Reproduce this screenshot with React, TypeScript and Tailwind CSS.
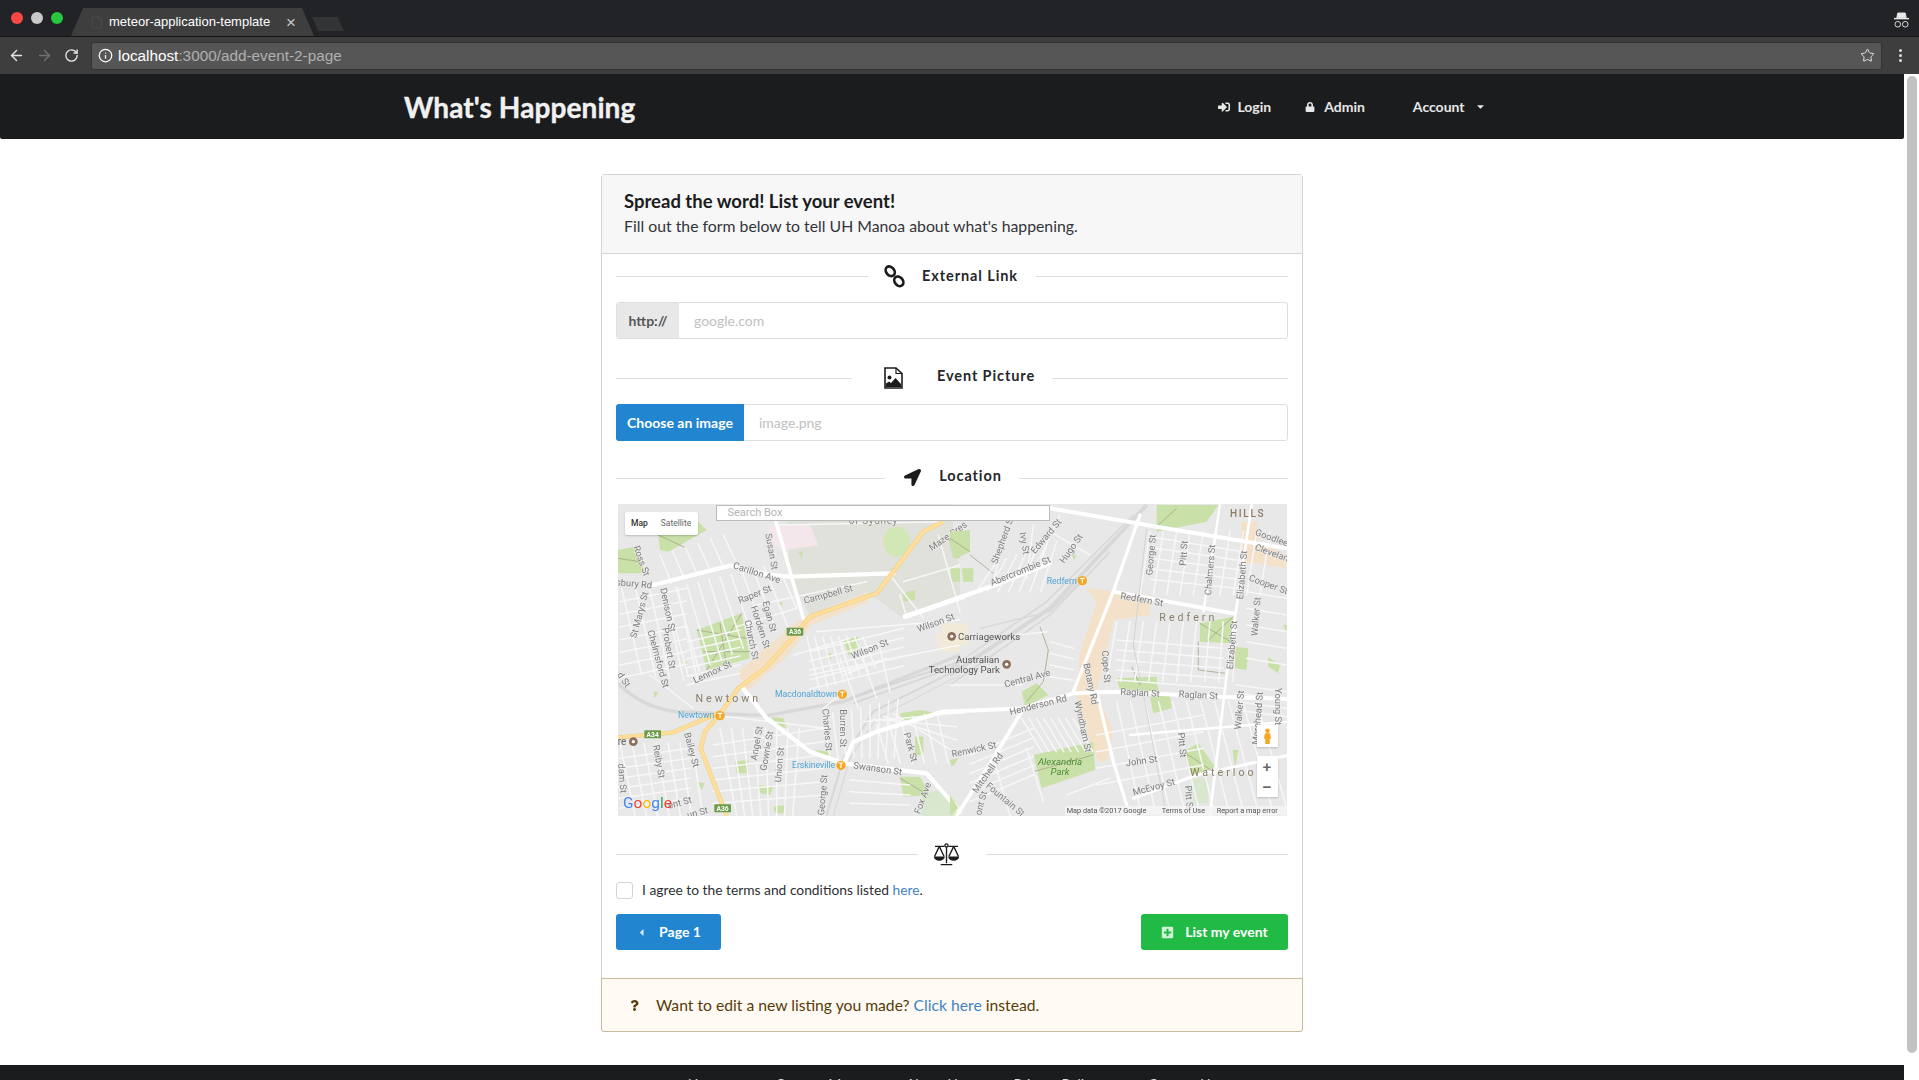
import React from "react";
import { ArrowLeft, ArrowRight, RotateCw, Info, Star, File } from "lucide-react";
import { FaSignInAlt, FaLock, FaCaretDown, FaCaretLeft, FaPlusSquare, FaQuestion, FaLocationArrow } from "react-icons/fa";

type Seg = number[];
type Lbl = [number, number, number, string];

const range = (n: number) => Array.from({ length: n }, (_, i) => i);

const leftParks: Seg[] = [
  [145, 120, 265, 80, 290, 105, 175, 170, 150, 165],
  [23, 165, 75, 155, 105, 235, 30, 235, 23, 232],
  [260, 405, 395, 355, 420, 490, 290, 525],
  [700, 435, 745, 425, 745, 470, 715, 480],
  [1015, 130, 1050, 125, 1050, 190, 1030, 190],
  [870, 655, 930, 645, 985, 655, 920, 670, 875, 682],
  [870, 845, 930, 845, 960, 900, 880, 905],
  [915, 725, 940, 725, 940, 780, 915, 780],
  [375, 800, 415, 795, 415, 835, 380, 835],
  [445, 870, 490, 875, 480, 900, 450, 895],
  [260, 860, 285, 865, 275, 885],
  [490, 935, 525, 930, 520, 955, 495, 955],
  [650, 475, 665, 475, 660, 500],
  [880, 295, 915, 285, 915, 315, 880, 320],
  [565, 170, 580, 170, 575, 190],
  [505, 322, 518, 322, 515, 335],
  [485, 665, 520, 670, 530, 700, 500, 690],
  [130, 590, 145, 590, 135, 610],
  [220, 500, 232, 500, 230, 518],
  [615, 765, 660, 770, 660, 785, 625, 780],
  [1020, 220, 1050, 220, 1050, 260, 1025, 260],
  [1020, 795, 1045, 790, 1030, 815],
];
const rightParks: Seg[] = [
  [620, 30, 805, 30, 770, 80, 620, 110],
  [750, 385, 850, 365, 850, 445, 750, 440],
  [500, 550, 620, 545, 625, 590, 510, 585],
  [600, 605, 660, 600, 665, 640, 610, 655],
  [855, 455, 895, 460, 890, 525, 855, 520],
  [955, 485, 990, 510, 985, 535, 955, 515],
  [250, 780, 430, 740, 435, 825, 275, 880],
  [215, 590, 260, 565, 295, 600, 225, 635],
  [700, 770, 745, 745, 795, 815, 725, 850],
  [848, 765, 865, 765, 855, 820],
  [0, 110, 60, 105, 60, 170, 20, 190, 0, 150],
  [35, 220, 70, 220, 70, 260, 40, 260],
  [0, 900, 25, 940, 0, 962],
  [0, 795, 20, 790, 5, 815],
  [1000, 390, 1010, 390, 1010, 415],
  [365, 180, 380, 180, 372, 195],
];

const leftMinor: Seg[] = [
  ...range(10).map((i) => [165 + i * 33, 285 - i * 8, 235 + i * 33, 545 - i * 17]),
  ...range(6).map((i) => [150 + i * 38, 180 - i * 12, 185 + i * 38, 265 - i * 14]),
  ...range(5).map((i) => [35 + i * 42, 280, 95 + i * 42, 540 + i * 5]),
  ...range(8).map((i) => [330 + i * 34, 700, 380 + i * 24, 962]),
  ...range(7).map((i) => [30 + i * 36, 745, 75 + i * 34, 962]),
  ...range(9).map((i) => [640 + i * 28, 660 - i * 6, 660 + i * 24, 790]),
  ...range(8).map((i) => [590 + i * 24, 425, 630 + i * 24, 590 - i * 10]),
  ...range(6).map((i) => [800 + i * 36, 690 - i * 8, 835 + i * 36, 805]),
  ...range(7).map((i) => [30, 320 + i * 38, 230, 280 + i * 38]),
  ...range(6).map((i) => [230, 440 + i * 26, 390, 405 + i * 26]),
  ...range(6).map((i) => [28, 790 + i * 30, 240, 760 + i * 30]),
  ...range(6).map((i) => [310, 750 + i * 35, 640, 700 + i * 40]),
  ...range(3).map((i) => [720, 855 + i * 35, 900, 870 + i * 30]),
  ...range(5).map((i) => [600, 470 + i * 28, 880, 400 + i * 28]),
  ...range(4).map((i) => [760 + i * 30, 680 - i * 8, 1040, 655 + i * 40]),
  [620, 410, 1050, 375],
  [600, 540, 1050, 450],
  [440, 330, 770, 260],
  [380, 395, 560, 340],
  [510, 90, 1000, 80],
  [560, 340, 520, 250],
  [880, 260, 1050, 210],
  [640, 640, 700, 590],
  [350, 665, 650, 700],
  [120, 540, 250, 640],
  [840, 240, 940, 370],
  [985, 120, 1050, 350],
  [890, 365, 870, 300],
  [550, 480, 720, 430],
  [700, 540, 830, 490],
  [690, 490, 745, 640],
  [750, 470, 800, 610],
  [810, 460, 840, 590],
];
const rightMinor: Seg[] = [
  ...range(10).map((i) => [500 + i * 40, 380, 470 + i * 42, 560]),
  ...range(11).map((i) => [500 + i * 42, 620, 570 + i * 44, 940]),
  ...range(10).map((i) => [600 + i * 40, 110, 570 + i * 40, 300]),
  ...range(8).map((i) => [215 + i * 22, 670, 275 + i * 22, 770]),
  ...range(7).map((i) => [80 + i * 32, 290, 140 + i * 30, 200 - i * 10]),
  ...range(5).map((i) => [500, 435 + i * 30, 820, 460 + i * 30]),
  ...range(5).map((i) => [600, 125 + i * 32, 880, 170 + i * 28]),
  ...range(5).map((i) => [890, 290 + i * 50, 1010, 310 + i * 50]),
  ...range(4).map((i) => [860, 570 + i * 25, 1010, 590 + i * 25]),
  ...range(4).map((i) => [440, 720 + i * 50, 760, 660 + i * 50]),
  ...range(6).map((i) => [60, 780 + i * 28, 250, 700 + i * 28]),
  ...range(4).map((i) => [300, 440 + i * 35, 370, 460 + i * 32]),
  [0, 570, 215, 570],
  [130, 790, 180, 962],
  [230, 760, 280, 920],
  [350, 900, 480, 850],
  [200, 420, 290, 410],
  [300, 110, 420, 180],
  [250, 90, 230, 250],
  [170, 100, 130, 260],
  [330, 60, 270, 190],
];

const leftLabels: Lbl[] = [
  [93, 198, 70, "Ross St"], [72, 268, 5, "sbury Rd"], [90, 360, -75, "St Marys St"], [172, 345, 78, "Denison St"],
  [143, 492, 75, "Chelmsford St"], [175, 460, 80, "Probert St"], [483, 170, 80, "Susan St"], [440, 235, 18, "Carillon Ave"],
  [435, 300, -22, "Raper St"], [450, 397, 72, "Hordern St"], [477, 365, 75, "Egan St"], [423, 435, 78, "Church St"],
  [655, 300, -15, "Campbell St"], [308, 533, -25, "Lennox St"], [780, 464, -22, "Wilson St"], [978, 385, -20, "Wilson St"],
  [1015, 125, -35, "Maze Cres"], [650, 705, 85, "Charles St"], [697, 700, 90, "Burren St"], [442, 745, -80, "Angel St"],
  [472, 768, -80, "Gowrie St"], [510, 810, -85, "Union St"], [243, 765, 75, "Bailey St"], [145, 800, 80, "Reiby St"],
  [803, 823, 8, "Swanson St"], [640, 900, -85, "George St"], [900, 757, 75, "Park St"], [940, 910, -70, "Fox Ave"],
  [210, 925, -15, "ent St"], [35, 850, 85, "dam St"], [263, 955, -15, "un St"], [40, 555, 55, "d St"],
];
const rightLabels: Lbl[] = [
  [72, 765, -12, "Renwick St"], [115, 835, -55, "Mitchell Rd"], [165, 915, 40, "Fountain St"], [95, 925, -75, "ont St"],
  [265, 632, -14, "Henderson Rd"], [232, 552, -15, "Central Ave"], [397, 695, 78, "Wyndham St"], [420, 567, 78, "Botany Rd"],
  [467, 515, 85, "Cope St"], [570, 595, 3, "Raglan St"], [745, 602, 3, "Raglan St"], [575, 315, 10, "Redfern St"],
  [605, 180, -85, "George St"], [703, 175, -85, "Pitt St"], [782, 225, -85, "Chalmers St"], [878, 240, -85, "Elizabeth St"],
  [848, 450, -85, "Elizabeth St"], [955, 270, 20, "Cooper St"], [965, 130, 20, "Goodlee"], [965, 175, 20, "Clevelan"],
  [920, 365, -85, "Walker St"], [870, 645, -85, "Walker St"], [925, 670, -85, "Morehead St"], [982, 635, 90, "Young St"],
  [695, 750, 85, "Pitt St"], [575, 800, -8, "John St"], [612, 878, -15, "McEvoy St"], [715, 905, 85, "Pitt S"],
  [212, 230, -22, "Abercrombie St"], [160, 135, -70, "Shepherd St"], [222, 145, 80, "Ivy St"], [290, 125, -50, "Edward St"],
  [365, 162, -55, "Hugo St"],
];

function Label({ l }: { l: Lbl }) {
  return (
    <text transform={`translate(${l[0]} ${l[1]}) rotate(${l[2]})`} textAnchor="middle" dominantBaseline="middle" fontSize="28" fill="#7d7d7d" stroke="#efefef" strokeWidth="3" paintOrder="stroke">
      {l[3]}
    </text>
  );
}

function Station({ x, y }: { x: number; y: number }) {
  return (
    <g>
      <circle cx={x} cy={y} r="14" fill="#f5a623" />
      <path d={`M${x - 7} ${y - 7}h14M${x} ${y - 7}v15`} stroke="#fff" strokeWidth="3.5" />
    </g>
  );
}

function Shield({ x, y, t }: { x: number; y: number; t: string }) {
  return (
    <g>
      <rect x={x - 25} y={y - 12} width="50" height="24" rx="2" fill="#6a9d49" />
      <text x={x} y={y + 8} textAnchor="middle" fontSize="20" fontWeight="700" fill="#fff">{t}</text>
    </g>
  );
}

function Spaced({ x, y, t }: { x: number; y: number; t: string }) {
  return <text x={x} y={y} textAnchor="middle" fontSize="32" letterSpacing="9" fill="#8c8068">{t}</text>;
}

function Poi({ x, y }: { x: number; y: number }) {
  return (
    <g>
      <circle cx={x} cy={y} r="13" fill="#8a6f5c" />
      <circle cx={x} cy={y} r="5" fill="#fff" />
    </g>
  );
}

function MapArt() {
  return (
    <svg viewBox="0 0 669 312" width="669" height="312" className="block blur-[0.5px]" fontFamily="Roboto, sans-serif">
      <rect width="669" height="312" fill="#e8e8e8" />
      <g transform="translate(-8 -9) scale(0.3333)">
        <polygon points="530,28 1020,28 1050,230 1050,300 880,370 770,290 600,360 540,250" fill="#e0e1da" />
        <polygon points="470,90 600,90 625,150 530,165 490,150" fill="#f4e7eb" />
        <polygon points="975,420 1050,400 1050,470 990,470" fill="#f2ead9" />
        <polygon points="1010,225 1050,205 1050,245 1025,250" fill="#f2ead9" />
        <polygon points="385,530 560,380 770,292 778,320 605,390 525,490 410,590" fill="#f3e2c9" />
        {leftParks.map((p, i) => <polygon key={i} points={p.join(",")} fill="#c9e1a8" />)}
        <ellipse cx="860" cy="140" rx="40" ry="45" fill="#d2e7b6" />
        <polygon points="935,900 1000,880 1050,950 1050,962 935,962" fill="#d9e7cf" />
        <g stroke="#a5a78a" strokeWidth="2.5" fill="none">
          <path d="M260,405 L410,430 M395,355 L290,525 M280,470 L420,470 M330,385 L350,515" />
          <path d="M145,120 L230,160 M23,190 L90,200 M1015,130 L1050,180 M870,850 L955,900" />
        </g>
        <path d="M23,565 Q100,640 200,650 L470,662 L700,620 L1050,480" stroke="#d8d8d8" strokeWidth="10" fill="none" />
        <path d="M650,962 L700,790 L790,650 L1050,520" stroke="#d8d8d8" strokeWidth="6" fill="none" />
        <path d="M670,962 L720,790 L800,670 L1050,540" stroke="#dadada" strokeWidth="4" fill="none" />
        <path d="M720,610 L1050,500 M730,625 L1050,510" stroke="#d6d6d6" strokeWidth="5" fill="none" />
        <g stroke="#f7f7f7" strokeWidth="4.5" strokeLinecap="round" fill="none">
          {leftMinor.map((s, i) => <line key={i} x1={s[0]} y1={s[1]} x2={s[2]} y2={s[3]} />)}
        </g>
        <g stroke="#fff" fill="none" strokeLinejoin="round" strokeLinecap="round">
          <path d="M130,270 L360,212 L480,240 L540,245 L850,235" strokeWidth="13" />
          <path d="M495,70 L580,370" strokeWidth="11" />
          <path d="M395,575 L470,670 L600,770 L700,805 L950,835 L1050,950" strokeWidth="13" />
          <path d="M700,810 L730,740 L800,710 L1000,650 L1060,650" strokeWidth="13" />
          <path d="M885,365 L1060,305" strokeWidth="15" />
        </g>
        <g fill="none" strokeLinejoin="round">
          <path d="M350,962 L310,860 L272,760 L285,710 L335,650 L385,580 L470,515 L555,420 L600,365 L800,295 L850,230 L940,110 L1000,80" stroke="#f3c87a" strokeWidth="13" />
          <path d="M23,728 L190,712 L335,650" stroke="#f3c87a" strokeWidth="13" />
          <path d="M350,962 L310,860 L272,760 L285,710 L335,650 L385,580 L470,515 L555,420 L600,365 L800,295 L850,230 L940,110 L1000,80" stroke="#fddf9b" strokeWidth="10.5" />
          <path d="M23,728 L190,712 L335,650" stroke="#fddf9b" strokeWidth="10.5" />
        </g>
        {leftLabels.map((l, i) => <Label key={i} l={l} />)}
        <text x="790" y="88" textAnchor="middle" fontSize="30" letterSpacing="2" fill="#888">of Sydney</text>
        <Spaced x={355} y={620} t="Newtown" />
        <Shield x={555} y={410} t="A36" />
        <Shield x={128} y={718} t="A34" />
        <Shield x={338} y={940} t="A36" />
        <g fontSize="26" fill="#4fa6d6">
          <text x="495" y="607">Macdonaldtown</text>
          <text x="204" y="670">Newtown</text>
          <text x="546" y="820">Erskineville</text>
        </g>
        <Station x={697} y={598} />
        <Station x={330} y={662} />
        <Station x={693} y={811} />
        <text x="23" y="750" fontSize="30" fill="#666">re</text>
        <Poi x={70} y={740} />
      </g>
      <g transform="translate(332 -9) scale(0.3333)">
        <rect x="-25" y="385" width="80" height="65" fill="#f2ead9" />
        <polygon points="410,280 600,300 600,360 490,375 470,470 440,590 490,710 470,800 445,800 420,740 380,600 390,470 440,320" fill="#f3e2c9" />
        <polygon points="875,80 920,80 925,140 1010,180 1010,220 920,205 880,205 870,150" fill="#f3e2c9" />
        {rightParks.map((p, i) => <polygon key={i} points={p.join(",")} fill="#c9e1a8" />)}
        <polygon points="725,850 775,850 775,925 730,925" fill="#d9e7cf" />
        <g stroke="#a5a78a" strokeWidth="2.5" fill="none">
          <path d="M620,95 L680,40 M750,385 L850,445 M850,365 L770,440 M545,515 L570,570 M270,395 L295,465 L280,560 L230,620 M250,830 L430,780 M745,440 L745,525 L825,535 M700,770 L790,830 M0,130 L60,170 M60,180 L130,235" />
        </g>
        <g stroke="#d8d8d8" fill="none">
          <path d="M0,540 L300,340 L450,180 L590,30" strokeWidth="12" />
          <path d="M0,570 L300,360 L480,170" strokeWidth="5" />
          <path d="M90,400 L300,350 L390,260" strokeWidth="4" />
          <path d="M0,520 L290,320 L430,180 L550,60" strokeWidth="5" />
        </g>
        <g stroke="#f7f7f7" strokeWidth="4.5" strokeLinecap="round" fill="none">
          {rightMinor.map((s, i) => <line key={i} x1={s[0]} y1={s[1]} x2={s[2]} y2={s[3]} />)}
        </g>
        <g stroke="#fff" fill="none" strokeLinejoin="round" strokeLinecap="round">
          <path d="M-20,325 L135,270 L300,205" strokeWidth="13" />
          <path d="M300,40 L620,95 L1020,162" strokeWidth="12" />
          <path d="M490,290 L850,355" strokeWidth="11" />
          <path d="M570,60 L490,290 L410,490 L370,590" strokeWidth="10" />
          <path d="M-20,650 L215,640 L370,595 L500,590 L800,605 L1020,612" strokeWidth="12" />
          <path d="M215,650 L130,790 L20,962" strokeWidth="11" />
          <path d="M440,590 L490,800 L540,962" strokeWidth="10" />
          <path d="M905,30 L830,540 L780,962" strokeWidth="8" />
          <path d="M810,30 L760,350" strokeWidth="7" />
          <path d="M550,910 L740,840 L1020,780" strokeWidth="9" />
          <path d="M540,720 L1020,680" strokeWidth="7" />
        </g>
        <path d="M590,100 L550,450 L580,600 L650,962" stroke="#cfcfcf" strokeWidth="2.5" fill="none" />
        {rightLabels.map((l, i) => <Label key={i} l={l} />)}
        <Spaced x={715} y={378} t="Redfern" />
        <Spaced x={820} y={843} t="Waterloo" />
        <text x="893" y="66" textAnchor="middle" fontSize="30" letterSpacing="5" fontWeight="500" fill="#8c7a62">HILLS</text>
        <text x="290" y="266" fontSize="26" fill="#4fa6d6">Redfern</text>
        <Station x={397} y={257} />
        <Poi x={5} y={424} />
        <text x="24" y="434" fontSize="29" fill="#555">Carriageworks</text>
        <text x="148" y="505" fontSize="29" fill="#555" textAnchor="end">Australian</text>
        <text x="150" y="535" fontSize="29" fill="#555" textAnchor="end">Technology Park</text>
        <Poi x={170} y={508} />
        <g fontSize="29" fontStyle="italic" fill="#4f8a36" textAnchor="middle">
          <text x="330" y="810">Alexandria</text>
          <text x="330" y="840">Park</text>
        </g>
        <rect x="345" y="933" width="665" height="29" fill="#f5f5f5" opacity="0.8" />
        <g fontSize="22" fill="#555">
          <text x="350" y="954">Map data ©2017 Google</text>
          <text x="635" y="954">Terms of Use</text>
          <text x="800" y="954">Report a map error</text>
        </g>
      </g>
      <text x="5" y="304" fontSize="15.5" fontFamily="Roboto, sans-serif">
        <tspan fill="#4285f4">G</tspan><tspan fill="#ea4335">o</tspan><tspan fill="#fbbc05">o</tspan><tspan fill="#4285f4">g</tspan><tspan fill="#34a853">l</tspan><tspan fill="#ea4335">e</tspan>
      </text>
    </svg>
  );
}

function Section({ children, className }: { children: React.ReactNode; className: string }) {
  return (
    <div className={`flex items-center ${className}`}>
      <div className="h-px flex-1 bg-[#dededf]" />
      {children}
      <div className="h-px flex-1 bg-[#dededf]" />
    </div>
  );
}

function ChainIcon() {
  return (
    <svg viewBox="0 0 22 24" width="21" height="23" fill="none" stroke="#1b1c1d" strokeWidth="2.8">
      <ellipse cx="6.5" cy="6.5" rx="5.5" ry="4.2" transform="rotate(50 6.5 6.5)" />
      <ellipse cx="15.5" cy="17" rx="5.5" ry="4.2" transform="rotate(50 15.5 17)" />
    </svg>
  );
}

function FileImageIcon() {
  return (
    <svg viewBox="0 0 19 22" width="19" height="22" className="shrink-0">
      <path d="M1 1h11l6 5.500V21H1z" fill="none" stroke="#1b1c1d" strokeWidth="1.6" />
      <path d="M12 1v5.500h6" fill="none" stroke="#1b1c1d" strokeWidth="1.2" />
      <circle cx="5.500" cy="10.500" r="2" fill="#1b1c1d" />
      <path d="M2 20v-3.500l3-2 2 1.500 4.500-5 5.500 6v3z" fill="#1b1c1d" />
    </svg>
  );
}

function ScaleIcon() {
  return (
    <svg viewBox="0 0 28 24" width="27" height="23" fill="none" stroke="#1b1c1d" strokeWidth="1.4">
      <circle cx="14" cy="2.5" r="1.6" />
      <path d="M14 4v17M8 22.500h12M2 3.500h10M16 3.500h10M6.500 3.500L1.500 14M6.500 3.500l5 10.500M21.500 3.500l-5 10.500M21.500 3.500l5 10.500" />
      <path d="M0.800 14h11.400a5.700 4.500 0 0 1-11.400 0zM15.800 14h11.400a5.700 4.500 0 0 1-11.400 0z" fill="#1b1c1d" stroke="none" />
    </svg>
  );
}

function Incognito() {
  return (
    <svg viewBox="0 0 16 18" width="15" height="17" fill="none" stroke="#e8e8e8" strokeWidth="1">
      <path d="M4 1h8l1 5H3z" fill="#e8e8e8" />
      <path d="M0 7h16" strokeWidth="1.5" />
      <circle cx="4" cy="13" r="3" />
      <circle cx="12" cy="13" r="3" />
    </svg>
  );
}

function BrowserChrome() {
  return (
    <div className="h-[74px] shrink-0 font-['Liberation_Sans',sans-serif]">
      <div className="flex h-[37px] items-end border-b border-[#131313] bg-[#222326]">
        <div className="flex h-[37px] w-[71px] items-center gap-2 pl-[11px]">
          <span className="h-3 w-3 rounded-full bg-[#fc4745]" />
          <span className="h-3 w-3 rounded-full bg-[#c9c9c9]" />
          <span className="h-3 w-3 rounded-full bg-[#27c83f]" />
        </div>
        <div className="flex h-[28px] w-[243px] items-center bg-[#3e3e3f] pl-[19px] text-[13px] text-white [clip-path:polygon(12px_0,231px_0,243px_100%,0_100%)]">
          <File className="h-[14px] w-[14px] text-[#4d4d4d]" strokeWidth={1.5} />
          <span className="ml-[5px] w-[163px] whitespace-nowrap">meteor-application-template</span>
          <span className="ml-[14px] text-[17px] leading-none text-[#c8c8c8]">×</span>
        </div>
        <div className="mb-[5px] ml-[-2px] h-[14px] w-[32px] bg-[#333436] [clip-path:polygon(0_0,80%_0,100%_100%,20%_100%)]" />
        <div className="flex-1" />
        <div className="pr-[10px] pb-[7px]"><Incognito /></div>
      </div>
      <div className="flex h-[37px] items-center bg-[#3e3e3f]">
        <div className="flex w-[91px] items-center gap-[11px] pl-[8px]">
          <ArrowLeft className="h-[17px] w-[17px] text-[#e4e4e4]" strokeWidth={2} />
          <ArrowRight className="h-[17px] w-[17px] text-[#707070]" strokeWidth={2} />
          <RotateCw className="h-[15px] w-[15px] text-[#e4e4e4]" strokeWidth={2.2} />
        </div>
        <div className="flex h-[28px] flex-1 items-center rounded-[3px] border border-[#333] bg-[#565656] pl-[6px] pr-[6px] text-[15.3px] text-[#b0b0b0]">
          <Info className="h-[15px] w-[15px] text-white" strokeWidth={2} />
          <span className="ml-[5px]"><span className="text-white">localhost</span>:3000/add-event-2-page</span>
          <Star className="ml-auto h-[15px] w-[15px] text-[#e4e4e4]" strokeWidth={1.6} />
        </div>
        <div className="flex w-[37px] flex-col items-center gap-[2px]">
          <span className="h-[3px] w-[3px] rounded-full bg-[#ddd]" />
          <span className="h-[3px] w-[3px] rounded-full bg-[#ddd]" />
          <span className="h-[3px] w-[3px] rounded-full bg-[#ddd]" />
        </div>
      </div>
    </div>
  );
}

export default function App() {
  return (
    <div className="flex h-screen flex-col overflow-hidden bg-white font-['Lato','Liberation_Sans',sans-serif] text-sm text-[#212223]">
      <BrowserChrome />
      <div className="flex min-h-0 flex-1">
        <div className="flex w-[1904px] flex-col">
          <nav className="flex h-[65px] shrink-0 items-center rounded-b-[2px] bg-[#1b1c1d] text-white/90">
            <div className="ml-[404px] text-[28px] leading-none font-bold tracking-[0.1px] whitespace-nowrap text-[#f1f1f1] [-webkit-text-stroke:0.4px_#f1f1f1]">What's Happening</div>
            <div className="ml-[583px] flex items-center font-bold">
              <FaSignInAlt className="h-[12px] w-[12px]" />
              <span className="ml-[7px]">Login</span>
              <FaLock className="ml-[34px] h-[10px] w-[10px]" />
              <span className="ml-[9px]">Admin</span>
              <span className="ml-[48px]">Account</span>
              <FaCaretDown className="ml-[10px] h-[11px] w-[11px]" />
            </div>
          </nav>

          <main className="flex-1 pt-[35px]">
            <div className="mx-auto w-[702px] rounded-[3px] border border-[#d4d4d5]">
              <div className="h-[79px] border-b border-[#d4d4d5] bg-[#f7f7f7] pt-[14px] pl-[22px]">
                <div className="text-[18.5px] leading-[25px] font-bold text-[#1b1c1d]">Spread the word! List your event!</div>
                <div className="mt-[1px] text-[15.8px] leading-[22px] text-[#33343a]">Fill out the form below to tell UH Manoa about what's happening.</div>
              </div>

              <div className="px-[14px]">
                <Section className="mt-[12px] h-[20px]">
                  <div className="flex items-center pr-[18px] pl-[16px]">
                    <ChainIcon />
                    <span className="ml-[17px] text-[14.5px] font-bold tracking-[0.9px] text-[#26272a]">External Link</span>
                  </div>
                </Section>
                <div className="mt-[16px] flex h-[37px] rounded-[3px] border border-[#dededf]">
                  <div className="flex w-[62px] items-center justify-center rounded-l-[3px] bg-[#e8e8e8] font-bold text-[#55565a]">http://</div>
                  <div className="flex flex-1 items-center pl-[15px] text-[#c0c0c0]">google.com</div>
                </div>

                <Section className="mt-[29px] h-[20px]">
                  <div className="flex h-[20px] items-center pr-[17px] pl-[32px]">
                    <FileImageIcon />
                    <span className="ml-[34px] -mt-[4px] text-[14.5px] font-bold tracking-[0.9px] text-[#26272a]">Event Picture</span>
                  </div>
                </Section>
                <div className="mt-[16px] flex h-[37px] rounded-[3px] border border-[#dededf]">
                  <div className="-my-px -ml-px flex w-[128px] items-center justify-center rounded-l-[3px] bg-[#2185d0] font-bold text-white">Choose an image</div>
                  <div className="flex flex-1 items-center pl-[15px] text-[#c0c0c0]">image.png</div>
                </div>

                <Section className="mt-[27px] h-[20px]">
                  <div className="flex items-center pr-[17px] pl-[19px]">
                    <FaLocationArrow className="h-[17px] w-[17px] text-[#1b1c1d]" />
                    <span className="ml-[18px] -mt-[3px] text-[14.5px] font-bold tracking-[0.9px] text-[#26272a]">Location</span>
                  </div>
                </Section>

                <div className="relative mx-auto mt-[16px] h-[312px] w-[669px] overflow-hidden">
                  <MapArt />
                  <div className="absolute top-[1px] left-[98px] flex h-[16px] w-[334px] items-center border border-[#bbb] bg-white pl-[11px] font-['Roboto',sans-serif] text-[11px] text-[#b5b5b5]">Search Box</div>
                  <div className="absolute top-[8px] left-[7px] flex h-[23px] w-[73px] items-center rounded-[2px] bg-white font-['Roboto',sans-serif] text-[8.5px] shadow-[0_1px_2px_rgba(0,0,0,0.2)]">
                    <span className="w-[30px] text-center font-medium text-[#333]">Map</span>
                    <span className="flex-1 text-center text-[#666]">Satellite</span>
                  </div>
                  <div className="absolute top-[221px] left-[639px] flex h-[22px] w-[21px] items-center justify-center bg-white shadow-[0_1px_2px_rgba(0,0,0,0.2)]">
                    <svg viewBox="0 0 10 18" width="9" height="16"><circle cx="5" cy="3" r="2.5" fill="#f5a623" /><path d="M2 6h6l1 6H7.500v6h-5v-6H1z" fill="#f5a623" /></svg>
                  </div>
                  <div className="absolute top-[252px] left-[639px] flex h-[41px] w-[21px] flex-col bg-white font-['Liberation_Sans',sans-serif] text-[#666] shadow-[0_1px_2px_rgba(0,0,0,0.2)]">
                    <span className="flex flex-1 items-center justify-center text-[15px] leading-none font-bold">+</span>
                    <span className="flex flex-1 items-center justify-center text-[15px] leading-none font-bold">−</span>
                  </div>
                </div>

                <Section className="mt-[26px] h-[24px]">
                  <div className="pr-[26px] pl-[15px]"><ScaleIcon /></div>
                </Section>

                <div className="mt-[15px] flex h-[18px] items-center">
                  <div className="h-[17px] w-[17px] rounded-[3px] border border-[#d4d4d5]" />
                  <span className="ml-[9px] text-[13.8px] text-[#2e2f32]">I agree to the terms and conditions listed <span className="text-[#4183c4]">here</span>.</span>
                </div>

                <div className="mt-[15px] flex items-center justify-between pb-[28px]">
                  <div className="flex h-[36px] w-[105px] items-center justify-center rounded-[3px] bg-[#2185d0] font-bold text-white">
                    <FaCaretLeft className="h-[11px] w-[11px] opacity-80" />
                    <span className="ml-[12px]">Page 1</span>
                  </div>
                  <div className="flex h-[36px] w-[147px] items-center justify-center rounded-[3px] bg-[#21ba45] font-bold text-white">
                    <FaPlusSquare className="h-[13px] w-[13px] opacity-80" />
                    <span className="ml-[11px]">List my event</span>
                  </div>
                </div>
              </div>

              <div className="-mx-px -mb-px flex h-[54px] items-center rounded-b-[3px] border border-[#c9ba9b] bg-[#fffaf3] pl-[27px] text-[15.7px] text-[#573a08]">
                <FaQuestion className="h-[11px] w-[11px]" />
                <span className="ml-[16px]">Want to edit a new listing you made? <span className="text-[#4183c4]">Click here</span> instead.</span>
              </div>
            </div>
          </main>

          <footer className="flex h-[15px] shrink-0 justify-center gap-[50px] overflow-hidden bg-[#1b1c1d] pt-[9px] text-sm leading-5 text-[#d8d8d8]">
            <span>Home</span><span>Campus Map</span><span>About Us</span><span>Privacy Policy</span><span>Contact Us</span>
          </footer>
        </div>
        <div className="flex w-[15px] justify-center bg-white pt-[2px]">
          <div className="h-[977px] w-[10px] rounded-full bg-[#c2c2c2]" />
        </div>
      </div>
    </div>
  );
}
